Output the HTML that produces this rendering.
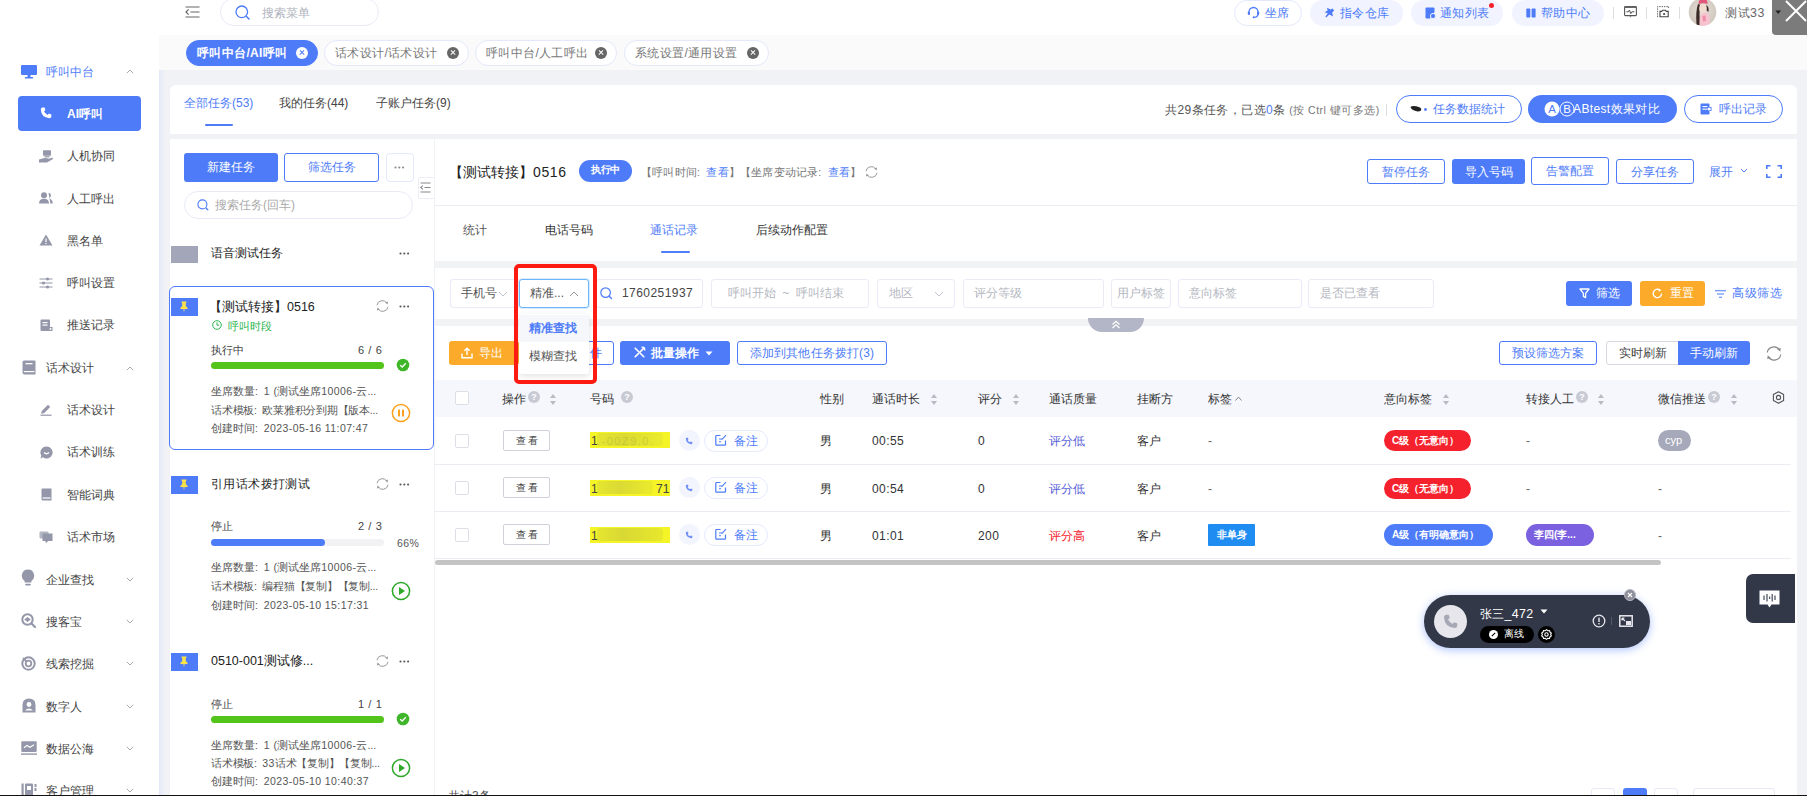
<!DOCTYPE html>
<html lang="zh">
<head>
<meta charset="utf-8">
<title>AI呼叫</title>
<style>
*{box-sizing:border-box;margin:0;padding:0}
html,body{width:1807px;height:796px;overflow:hidden;background:#f0f2f6}
body{font-family:"Liberation Sans",sans-serif;font-size:12px;color:#333;position:relative}
.a{position:absolute}
.t{position:absolute;white-space:nowrap;line-height:16px}
.blue{color:#4e7cf9 !important}
.bgblue{background:#4e7cf9}
svg{display:block}
/* sidebar */
#side{left:0;top:0;width:159px;height:796px;background:#fff}
#sideb{left:159px;top:0;width:6px;height:796px;background:linear-gradient(90deg,#e2e6f6,#eaedf8 40%,rgba(240,242,247,0))}
.mi{position:absolute;left:67px;font-size:12px;line-height:16px;color:#444;white-space:nowrap}
.mp{position:absolute;left:47px;font-size:12px;line-height:16px;color:#444;white-space:nowrap}
.ic{position:absolute}
/* top */
#top{left:159px;top:0;width:1648px;height:35px;background:#fff}
#tabs{left:159px;top:35px;width:1648px;height:35px;background:#fafafa}
.pill{position:absolute;top:0;height:26px;border-radius:13px;background:#f1f4fe;color:#4e7cf9;font-size:12px;line-height:26px;white-space:nowrap;letter-spacing:0.3px}
.tab{position:absolute;top:40px;height:26px;border-radius:13px;background:#fff;border:1px solid #e4e8fa;color:#777;font-size:12px;line-height:24px;padding-left:10px;white-space:nowrap;letter-spacing:0.35px}
.tab i{position:absolute;right:9px;top:6px;width:12px;height:12px;border-radius:6px;background:#666}
.tab i:before,.tab i:after{content:"";position:absolute;left:3px;top:5.4px;width:6px;height:1.3px;background:#fff;transform:rotate(45deg)}
.tab i:after{transform:rotate(-45deg)}
.tab.on i:before,.tab.on i:after{background:#4e7cf9}
.panel{position:absolute;background:#fff}
.btn{position:absolute;font-size:12px;text-align:center;white-space:nowrap;border-radius:3px}
.inp{position:absolute;top:279px;height:29px;border:1px solid #e9ecf8;border-radius:3px;background:#fff;font-size:12px;line-height:27px;color:#b4b7c0;white-space:nowrap;padding-left:10px}
.th{position:absolute;top:391px;font-size:12px;line-height:16px;color:#333;white-space:nowrap}
.td{position:absolute;font-size:12px;line-height:16px;color:#333;white-space:nowrap}
.cb{position:absolute;left:455px;width:14px;height:14px;border:1px solid #dcdfe6;border-radius:2px;background:#fff}
.tag{position:absolute;height:21px;border-radius:11px;color:#fff;font-size:10px;font-weight:bold;line-height:21px;padding:0 8px;white-space:nowrap}
.sm{position:absolute;font-size:10.5px;line-height:14px;color:#555;white-space:nowrap;left:211px;letter-spacing:0}
.sm b{font-weight:normal;letter-spacing:0.4px}
.sm u{display:inline-block;width:3px;text-decoration:none}
.mp{left:46px}
</style>
</head>
<body>
<!-- SIDEBAR -->
<div id="side" class="a"></div>
<div id="sideb" class="a"></div>
<div class="mp blue" style="top:64px">呼叫中台</div>
<svg class="ic" style="left:21px;top:65px" width="16" height="14" viewBox="0 0 16 14"><rect x="0" y="0" width="16" height="10" rx="1" fill="#4e7cf9"/><rect x="6.5" y="10" width="3" height="2" fill="#4e7cf9"/><rect x="4" y="12" width="8" height="1.5" fill="#4e7cf9"/></svg>
<svg class="ic" style="left:126px;top:69px" width="8" height="5" viewBox="0 0 8 5"><path d="M0.8 4.2 L4 1 L7.2 4.2" fill="none" stroke="#aaa" stroke-width="1"/></svg>

<div class="a bgblue" style="left:18px;top:96px;width:123px;height:35px;border-radius:4px"></div>
<svg class="ic" style="left:40px;top:107px" width="12" height="12" viewBox="0 0 12 12"><path d="M2.6 0.6 L4.6 0.6 L5.4 3.2 L4 4.2 Q5 6.8 7.8 8 L8.8 6.6 L11.4 7.4 L11.4 9.4 Q11.2 11.2 9.4 11.2 Q1.2 10.6 0.8 2.6 Q0.8 0.8 2.6 0.6Z" fill="#fff"/></svg>
<div class="mi" style="top:106px;color:#fff;font-weight:bold">AI呼叫</div>

<svg class="ic" style="left:39px;top:150px" width="14" height="13" viewBox="0 0 14 13"><rect x="4" y="0.3" width="8" height="5.4" rx="0.8" fill="#9497a9"/><rect x="5.5" y="6.2" width="5" height="1.2" fill="#9497a9"/><path d="M0 9.4 L3.6 8.4 Q7 7.6 10 8.8 L13.4 7.6 L14 9 L8 12.6 L0 12.6Z" fill="#9497a9"/></svg>
<div class="mi" style="top:148px">人机协同</div>

<svg class="ic" style="left:39px;top:192px" width="14" height="12" viewBox="0 0 14 12"><circle cx="5" cy="3.2" r="3" fill="#9497a9"/><path d="M0 11.5 Q0 6.8 5 6.8 Q10 6.8 10 11.5Z" fill="#9497a9"/><path d="M9.5 0.8 Q12 1 12 3.4 Q12 5.6 9.8 6.2 Q13.6 7 13.8 11.5 L11.4 11.5" fill="#9497a9"/></svg>
<div class="mi" style="top:191px">人工呼出</div>

<svg class="ic" style="left:39px;top:234px" width="14" height="12" viewBox="0 0 14 12"><path d="M7 0.5 L13.5 11.5 L0.5 11.5Z" fill="#9497a9"/><rect x="6.4" y="4.5" width="1.2" height="3.6" fill="#fff"/><rect x="6.4" y="9" width="1.2" height="1.2" fill="#fff"/></svg>
<div class="mi" style="top:233px">黑名单</div>

<svg class="ic" style="left:39px;top:277px" width="14" height="12" viewBox="0 0 14 12"><g stroke="#9497a9" stroke-width="1.2" fill="none"><path d="M0.5 2 H13.5 M0.5 6 H13.5 M0.5 10 H13.5"/></g><g fill="#9497a9"><circle cx="8.5" cy="2" r="1.6"/><circle cx="4.5" cy="6" r="1.6"/><circle cx="8.5" cy="10" r="1.6"/></g></svg>
<div class="mi" style="top:275px">呼叫设置</div>

<svg class="ic" style="left:40px;top:319px" width="13" height="13" viewBox="0 0 13 13"><path d="M1.5 0.5 H9 Q10 0.5 10 1.5 V8 H12.5 V12 H1.5 Q0.5 12 0.5 11 V1.5 Q0.5 0.5 1.5 0.5Z" fill="#9497a9"/><rect x="2.5" y="3" width="5" height="1.2" fill="#fff"/><rect x="2.5" y="5.5" width="5" height="1.2" fill="#fff"/><circle cx="10.5" cy="10" r="1" fill="#fff"/></svg>
<div class="mi" style="top:317px">推送记录</div>

<svg class="ic" style="left:22px;top:360px" width="14" height="15" viewBox="0 0 14 15"><path d="M2 0.5 H12.5 Q13.5 0.5 13.5 1.5 V14.5 H2.5 Q0.5 14.5 0.5 12.5 V2 Q0.5 0.5 2 0.5Z" fill="#9497a9"/><rect x="3.5" y="3" width="7" height="1.3" fill="#fff"/><rect x="1.8" y="11" width="10.6" height="1.2" fill="#fff"/></svg>
<div class="mp" style="top:360px">话术设计</div>
<svg class="ic" style="left:126px;top:366px" width="8" height="5" viewBox="0 0 8 5"><path d="M0.8 4.2 L4 1 L7.2 4.2" fill="none" stroke="#aaa" stroke-width="1"/></svg>

<svg class="ic" style="left:40px;top:404px" width="12" height="12" viewBox="0 0 12 12"><path d="M8 0.8 L10.2 3 L4 9.2 L1.2 9.8 L1.8 7Z" fill="#9497a9"/><rect x="0.5" y="10.6" width="11" height="1.2" fill="#9497a9"/></svg>
<div class="mi" style="top:402px">话术设计</div>

<svg class="ic" style="left:40px;top:446px" width="13" height="13" viewBox="0 0 13 13"><path d="M6.5 0.5 A6 6 0 1 1 3 11.3 L0.5 12.5 L1.3 9.6 A6 6 0 0 1 6.5 0.5Z" fill="#9497a9"/><path d="M4 6.5 Q6.5 9 9 6.5" stroke="#fff" stroke-width="1.2" fill="none"/></svg>
<div class="mi" style="top:444px">话术训练</div>

<svg class="ic" style="left:41px;top:488px" width="11" height="13" viewBox="0 0 11 13"><path d="M1.5 0.5 H10.5 V12.5 H2 Q0.5 12.5 0.5 11 V1.5 Q0.5 0.5 1.5 0.5Z" fill="#9497a9"/><rect x="1.6" y="9.4" width="8" height="1.2" fill="#fff"/></svg>
<div class="mi" style="top:487px">智能词典</div>

<svg class="ic" style="left:39px;top:531px" width="14" height="13" viewBox="0 0 14 13"><rect x="0.5" y="0.5" width="9" height="7" rx="1" fill="#b3b6c3"/><path d="M3.5 2.5 H13.5 V10 H9 L7.5 12 L6 10 H3.5Z" fill="#9497a9"/></svg>
<div class="mi" style="top:529px">话术市场</div>

<svg class="ic" style="left:21px;top:569px" width="14" height="18" viewBox="0 0 12 16"><path d="M6 0.5 A5.5 5.5 0 0 1 9 10.6 V12 H3 V10.6 A5.5 5.5 0 0 1 6 0.5Z" fill="#9497a9"/><rect x="3.5" y="13" width="5" height="1.6" rx="0.8" fill="#9497a9"/></svg>
<div class="mp" style="top:572px">企业查找</div>
<svg class="ic" style="left:126px;top:577px" width="8" height="5" viewBox="0 0 8 5"><path d="M0.8 0.8 L4 4 L7.2 0.8" fill="none" stroke="#aaa" stroke-width="1"/></svg>

<svg class="ic" style="left:21px;top:613px" width="15" height="15" viewBox="0 0 15 15"><circle cx="6.5" cy="6.5" r="5.2" fill="none" stroke="#9497a9" stroke-width="2"/><path d="M10.5 10.5 L14 14" stroke="#9497a9" stroke-width="2.2" stroke-linecap="round"/><path d="M3.2 6.5 L6.5 4 L9.8 6.5 L6.5 9Z" fill="#9497a9"/></svg>
<div class="mp" style="top:614px">搜客宝</div>
<svg class="ic" style="left:126px;top:619px" width="8" height="5" viewBox="0 0 8 5"><path d="M0.8 0.8 L4 4 L7.2 0.8" fill="none" stroke="#aaa" stroke-width="1"/></svg>

<svg class="ic" style="left:21px;top:656px" width="15" height="15" viewBox="0 0 15 15"><circle cx="7.5" cy="7.5" r="6.2" fill="none" stroke="#9497a9" stroke-width="2"/><circle cx="7.5" cy="7.5" r="2.8" fill="none" stroke="#9497a9" stroke-width="1.8"/><path d="M2 2 L5.5 5.5" stroke="#9497a9" stroke-width="1.8"/></svg>
<div class="mp" style="top:656px">线索挖掘</div>
<svg class="ic" style="left:126px;top:661px" width="8" height="5" viewBox="0 0 8 5"><path d="M0.8 0.8 L4 4 L7.2 0.8" fill="none" stroke="#aaa" stroke-width="1"/></svg>

<svg class="ic" style="left:22px;top:698px" width="14" height="15" viewBox="0 0 14 15"><path d="M7 0.5 Q13.5 0.5 13.5 7 V14.5 H0.5 V7 Q0.5 0.5 7 0.5Z" fill="#9497a9"/><circle cx="7" cy="6.5" r="2.4" fill="#fff"/><path d="M3 12.5 Q7 8.5 11 12.5Z" fill="#fff"/></svg>
<div class="mp" style="top:699px">数字人</div>
<svg class="ic" style="left:126px;top:704px" width="8" height="5" viewBox="0 0 8 5"><path d="M0.8 0.8 L4 4 L7.2 0.8" fill="none" stroke="#aaa" stroke-width="1"/></svg>

<svg class="ic" style="left:21px;top:741px" width="16" height="14" viewBox="0 0 16 14"><rect x="0.3" y="0.3" width="15.4" height="10.6" rx="1" fill="#9497a9"/><path d="M3 6.8 L6 4.4 L9 6.2 L13 3.8" fill="none" stroke="#fff" stroke-width="1.2"/><rect x="0" y="12.4" width="16" height="1.4" fill="#9497a9"/></svg>
<div class="mp" style="top:741px">数据公海</div>
<svg class="ic" style="left:126px;top:746px" width="8" height="5" viewBox="0 0 8 5"><path d="M0.8 0.8 L4 4 L7.2 0.8" fill="none" stroke="#aaa" stroke-width="1"/></svg>

<svg class="ic" style="left:21px;top:783px" width="16" height="14" viewBox="0 0 16 14"><rect x="0.5" y="0.5" width="2.2" height="13" fill="#9497a9"/><rect x="4" y="0.5" width="8" height="13" rx="1" fill="#9497a9"/><rect x="6" y="3" width="4" height="4" fill="#fff"/><rect x="13.5" y="1" width="2" height="3" fill="#9497a9"/><rect x="13.5" y="5" width="2" height="3" fill="#9497a9"/></svg>
<div class="mp" style="top:783px">客户管理</div>
<svg class="ic" style="left:126px;top:788px" width="8" height="5" viewBox="0 0 8 5"><path d="M0.8 0.8 L4 4 L7.2 0.8" fill="none" stroke="#aaa" stroke-width="1"/></svg>

<!-- TOP BAR -->
<div id="top" class="a"></div>
<div id="tabs" class="a"></div>
<svg class="ic" style="left:185px;top:6px" width="15" height="12" viewBox="0 0 15 12"><g stroke="#666" stroke-width="1.2" fill="none"><path d="M0.5 1 H14.5 M5.5 6 H14.5 M0.5 11 H14.5"/><path d="M3.6 3.4 L1 6 L3.6 8.6"/></g></svg>
<div class="a" style="left:220px;top:-2px;width:159px;height:28px;border:1px solid #e8ebf7;border-radius:14px;background:#fff"></div>
<svg class="ic" style="left:235px;top:5px" width="16" height="15" viewBox="0 0 16 15"><circle cx="6.8" cy="6.8" r="5.8" fill="none" stroke="#4e7cf9" stroke-width="1.3"/><path d="M11.5 11.5 L14 14" stroke="#4e7cf9" stroke-width="1.5" stroke-linecap="round"/></svg>
<div class="t" style="left:262px;top:5px;color:#b0b3bd">搜索菜单</div>

<div class="pill" style="left:1234px;width:68px;background:#fff;border:1px solid #e4e8fa;line-height:24px;padding-left:30px">坐席</div>
<svg class="ic" style="left:1247px;top:6px" width="13" height="13" viewBox="0 0 13 13"><path d="M2 8 V6 A4.5 4.5 0 0 1 11 6 V8 Q11 11 7.5 11.3" fill="none" stroke="#4e7cf9" stroke-width="1.3"/><rect x="0.8" y="5.5" width="2.2" height="3.6" rx="1" fill="#4e7cf9"/><rect x="10" y="5.5" width="2.2" height="3.6" rx="1" fill="#4e7cf9"/><circle cx="6.8" cy="11.3" r="1.1" fill="#4e7cf9"/></svg>
<div class="pill" style="left:1310px;width:93px;padding-left:30px">指令仓库</div>
<svg class="ic" style="left:1324px;top:7px" width="11" height="11" viewBox="0 0 11 11"><path d="M3 0.8 L6.6 2.4 L8.4 1.6 L10.2 3.4 L8.2 5.4 L9 9.6 L5.4 7.6 L2.2 10.4 L1.4 9.6 L3.8 6.2 L0.6 5.2 L3.6 3.6Z" fill="#4e7cf9"/></svg>
<div class="pill" style="left:1411px;width:92px;padding-left:29px">通知列表</div>
<svg class="ic" style="left:1425px;top:7px" width="11" height="12" viewBox="0 0 11 12"><path d="M1.5 0.5 H8.5 Q9.5 0.5 9.5 1.5 V5 L5 11.5 H1.5 Q0.5 11.5 0.5 10.5 V1.5 Q0.5 0.5 1.5 0.5Z" fill="#4e7cf9"/><circle cx="8" cy="9" r="2.6" fill="#4e7cf9" stroke="#f1f4fe" stroke-width="1"/></svg>
<div class="a" style="left:1489px;top:3px;width:5px;height:5px;border-radius:3px;background:#f5222d"></div>
<div class="pill" style="left:1512px;width:92px;padding-left:29px">帮助中心</div>
<svg class="ic" style="left:1526px;top:8px" width="10" height="10" viewBox="0 0 10 10"><rect x="0.3" y="0.5" width="4" height="9" rx="0.8" fill="#4e7cf9"/><rect x="5.6" y="0.5" width="4" height="9" rx="0.8" fill="#4e7cf9"/></svg>

<div class="a" style="left:1613px;top:7px;width:1px;height:12px;background:#ddd"></div>
<svg class="ic" style="left:1624px;top:6px" width="13" height="12" viewBox="0 0 13 12"><rect x="0.6" y="0.6" width="11.8" height="9" rx="0.8" fill="none" stroke="#555" stroke-width="1.1"/><rect x="0.6" y="0.4" width="11.8" height="1.6" fill="#666"/><path d="M2.4 5.8 H4.4 L5.4 4 L6.8 7.6 L7.8 5.8 H10.4" fill="none" stroke="#555" stroke-width="1"/><path d="M5.5 10.5 H7.5 L6.5 11.6Z" fill="#555"/></svg>
<div class="a" style="left:1646px;top:7px;width:1px;height:12px;background:#ddd"></div>
<svg class="ic" style="left:1657px;top:6px" width="12" height="12" viewBox="0 0 12 12"><path d="M0.6 11 V0.6 H11.4" fill="none" stroke="#666" stroke-width="1" stroke-dasharray="1.4 1"/><path d="M11.4 0.6 V3" fill="none" stroke="#666" stroke-width="1" stroke-dasharray="1.4 1"/><path d="M3 5.4 H4.8 L5.6 4.2 H8.4 L9.2 5.4 H11.2 V10.8 H3Z" fill="none" stroke="#444" stroke-width="1.1"/><circle cx="7.1" cy="8" r="1.1" fill="#444"/></svg>
<div class="a" style="left:1679px;top:7px;width:1px;height:12px;background:#ddd"></div>
<!-- avatar -->
<svg class="ic" style="left:1688px;top:-1px" width="29" height="28" viewBox="0 0 29 28"><defs><clipPath id="av"><circle cx="14.5" cy="13" r="13.8"/></clipPath><radialGradient id="avg" cx="0.5" cy="0.4" r="0.7"><stop offset="0" stop-color="#e6e0d8"/><stop offset="1" stop-color="#c9c0b4"/></radialGradient></defs><g clip-path="url(#av)"><rect width="29" height="28" fill="url(#avg)"/><path d="M10 5 Q7.5 12 8.5 26 L12.5 26 Q10.5 14 12.5 6Z" fill="#3a2b27"/><path d="M17.5 6 Q21.5 7 20.5 13 L18 11Z" fill="#3a2b27"/><ellipse cx="15" cy="9.5" rx="3.8" ry="4.4" fill="#f2dcd2"/><path d="M10.5 5.2 Q10.5 -1 15.5 -0.5 Q20 0 19.5 5 Q15 3.6 10.5 5.2Z" fill="#e2567a"/><path d="M11.5 27 Q11 16 14 14.5 L18.5 13.5 Q22.5 15 21.5 27Z" fill="#f7c3d0"/><path d="M14.5 17 L17.5 16.5 L17.8 22 L15 22.5Z" fill="#ee7f9d" opacity=".8"/></g></svg>
<div class="t" style="left:1725px;top:5px;font-size:12.4px;letter-spacing:0.5px;color:#666">测试33</div>
<div class="a" style="left:1772px;top:0;width:35px;height:35px;background:#7b7b7b;border-bottom-left-radius:4px"></div>
<svg class="ic" style="left:1772px;top:0" width="35" height="35" viewBox="0 0 35 35"><path d="M3.4 10.6 H9 L6.2 14Z" fill="#222"/><path d="M14 1 L34 21 M34 1 L14 21" stroke="#fff" stroke-width="2"/></svg>

<div class="tab on" style="left:186px;width:132px;background:#4e7cf9;border-color:#4e7cf9;color:#fff;font-weight:bold">呼叫中台/AI呼叫<i style="background:#fff"></i></div>
<div class="tab" style="left:324px;width:145px">话术设计/话术设计<i></i></div>
<div class="tab" style="left:475px;width:142px">呼叫中台/人工呼出<i></i></div>
<div class="tab" style="left:624px;width:145px">系统设置/通用设置<i></i></div>

<!-- TASK TABS -->
<div class="panel" style="left:170px;top:85px;width:1627px;height:49px;border-radius:6px 6px 0 0"></div>
<div class="t blue" style="left:184px;top:95px">全部任务(53)</div>
<div class="a bgblue" style="left:205px;top:124px;width:28px;height:2px;border-radius:1px"></div>
<div class="t" style="left:279px;top:95px;color:#444">我的任务(44)</div>
<div class="t" style="left:376px;top:95px;color:#444">子账户任务(9)</div>
<div class="t" style="left:1165px;top:102px;color:#555;letter-spacing:0.4px">共29条任务，已选<span class="blue">0</span>条 <span style="font-size:10.5px;color:#777;letter-spacing:0.5px">(按 Ctrl 键可多选)</span></div>
<div class="a" style="left:1386px;top:104px;width:1px;height:12px;background:#ddd"></div>
<div class="btn blue" style="left:1396px;top:95px;width:126px;height:28px;border:1px solid #4e7cf9;border-radius:14px;line-height:26px;background:#fff;padding-left:20px">任务数据统计</div>
<svg class="ic" style="left:1410px;top:105px" width="18" height="8" viewBox="0 0 18 8"><path d="M0.5 2 Q3 0 10 2.5 Q12 3.5 11 5.5 Q8 7.5 3 5 Q1 4 0.5 2Z" fill="#222"/><circle cx="15.5" cy="4.5" r="1.4" fill="#4e7cf9"/></svg>
<div class="btn bgblue" style="left:1528px;top:95px;width:149px;height:28px;border-radius:14px;line-height:28px;color:#fff;padding-left:28px;letter-spacing:0.35px">ABtest效果对比</div>
<svg class="ic" style="left:1544px;top:101px" width="32" height="16" viewBox="0 0 32 16"><circle cx="23" cy="8" r="7" fill="#4e7cf9" stroke="#fff" stroke-width="1"/><circle cx="8" cy="8" r="7.5" fill="#fff"/><text x="8" y="12.2" font-family="Liberation Sans" font-size="11.5" text-anchor="middle" fill="#4e7cf9">A</text><text x="23" y="12.2" font-family="Liberation Sans" font-size="11.5" text-anchor="middle" fill="#fff">B</text></svg>
<div class="btn blue" style="left:1684px;top:95px;width:99px;height:28px;border:1px solid #4e7cf9;border-radius:14px;line-height:26px;background:#fff;padding-left:18px">呼出记录</div>
<svg class="ic" style="left:1700px;top:103px" width="12" height="12" viewBox="0 0 12 12"><path d="M1.5 0.5 H8.5 Q9.5 0.5 9.5 1.5 V4 H11.5 V8 H9.5 V10.5 Q9.5 11.5 8.5 11.5 H1.5 Q0.5 11.5 0.5 10.5 V1.5 Q0.5 0.5 1.5 0.5Z" fill="#4e7cf9"/><rect x="2.4" y="3" width="5" height="1.1" fill="#fff"/><rect x="2.4" y="5.6" width="5" height="1.1" fill="#fff"/><circle cx="9.2" cy="6" r="1.6" fill="#fff"/></svg>

<!-- LEFT LIST -->
<div class="panel" style="left:170px;top:139px;width:264px;height:657px"></div>
<div class="btn bgblue" style="left:184px;top:153px;width:94px;height:29px;line-height:29px;color:#fff">新建任务</div>
<div class="btn blue" style="left:284px;top:153px;width:95px;height:29px;line-height:27px;border:1px solid #4e7cf9;background:#fff">筛选任务</div>
<div class="btn" style="left:386px;top:153px;width:28px;height:29px;border:1px solid #e4e8fa;background:#fff;border-radius:4px"></div><svg class="ic" style="left:394px;top:166px" width="11" height="3" viewBox="0 0 11 3"><g fill="#888"><circle cx="1.5" cy="1.5" r="1.05"/><circle cx="5.3" cy="1.5" r="1.05"/><circle cx="9.1" cy="1.5" r="1.05"/></g></svg>
<div class="a" style="left:418px;top:177px;width:16px;height:22px;border:1px solid #eceef6;border-right:none;background:#fff;border-radius:2px 0 0 2px"></div>
<svg class="ic" style="left:420px;top:182px" width="11" height="11" viewBox="0 0 11 11"><g stroke="#888" stroke-width="1.1" fill="none"><path d="M0.5 1 H10.5 M4.5 5.5 H10.5 M0.5 10 H10.5"/><path d="M2.8 3.6 L0.8 5.5 L2.8 7.4"/></g></svg>
<div class="a" style="left:184px;top:191px;width:229px;height:28px;border:1px solid #e8ebf7;border-radius:14px;background:#fff"></div>
<svg class="ic" style="left:197px;top:199px" width="13" height="13" viewBox="0 0 13 13"><circle cx="5.4" cy="5.4" r="4.5" fill="none" stroke="#4e7cf9" stroke-width="1.1"/><path d="M9.2 9.2 L10.8 10.8" stroke="#4e7cf9" stroke-width="1.3" stroke-linecap="round"/></svg>
<div class="t" style="left:215px;top:197px;color:#aaa">搜索任务(回车)</div>
<div class="a" style="left:171px;top:246px;width:27px;height:17px;background:#a3a6b9"></div>
<div class="t" style="left:211px;top:245px;color:#222">语音测试任务</div><svg class="ic" style="left:399px;top:252px" width="11" height="3" viewBox="0 0 11 3"><g fill="#555"><circle cx="1.5" cy="1.5" r="1.05"/><circle cx="5.3" cy="1.5" r="1.05"/><circle cx="9.1" cy="1.5" r="1.05"/></g></svg>
<div class="a" style="left:169px;top:286px;width:265px;height:164px;border:1px solid #4e7cf9;border-radius:6px;background:#fff"></div>
<div class="a bgblue" style="left:171px;top:298px;width:27px;height:18px"></div><svg class="ic" style="left:179px;top:301px" width="10" height="12" viewBox="0 0 10 12"><path d="M2.5 0.5 H7.5 V1.6 L6.8 2 V5 L8.6 7 V8 H5.6 L5 11.5 L4.4 8 H1.4 V7 L3.2 5 V2 L2.5 1.6Z" fill="#ffe14a"/></svg>
<div class="t" id="c1t" style="left:209px;top:299px;font-size:12.5px;color:#222">【测试转接】<b style="font-weight:normal;letter-spacing:0">0516</b></div><svg class="ic" style="left:376px;top:300px" width="13" height="12" viewBox="0 0 13 12"><g fill="none" stroke="#999" stroke-width="1"><path d="M1 5.2 A5.4 5.4 0 0 1 10.8 3"/><path d="M12 6.8 A5.4 5.4 0 0 1 2.2 9"/></g><path d="M9.2 2.4 L12 1.6 L11.6 4.6Z" fill="#999"/><path d="M3.8 9.6 L1 10.4 L1.4 7.4Z" fill="#999"/></svg><svg class="ic" style="left:399px;top:305px" width="11" height="3" viewBox="0 0 11 3"><g fill="#555"><circle cx="1.5" cy="1.5" r="1.05"/><circle cx="5.3" cy="1.5" r="1.05"/><circle cx="9.1" cy="1.5" r="1.05"/></g></svg>
<svg class="ic" style="left:212px;top:320px" width="10" height="10" viewBox="0 0 10 10"><circle cx="5" cy="5" r="4.3" fill="none" stroke="#2fb552" stroke-width="1"/><path d="M5 2.4 V5.2 H7.2" fill="none" stroke="#2fb552" stroke-width="1"/></svg>
<div class="t" style="left:228px;top:318px;font-size:10.5px;color:#2fb552">呼叫时段</div>
<div class="t" style="left:211px;top:342px;font-size:10.5px;color:#444">执行中</div><div class="t" style="left:358px;top:342px;font-size:11px;color:#444;letter-spacing:0.6px;word-spacing:0">6 / 6</div>
<div class="a" style="left:211px;top:362px;width:173px;height:7px;border-radius:4px;background:#52c41a"></div><svg class="ic" style="left:396px;top:358px" width="14" height="14" viewBox="0 0 14 14"><circle cx="7" cy="7" r="6.3" fill="#3fb52a"/><path d="M4.2 7.2 L6.2 9 L9.8 5.2" fill="none" stroke="#fff" stroke-width="1.3"/></svg>
<div class="sm" id="s1" style="top:384px">坐席数量:<u></u> <b>1 (</b>测试坐席<b>10006-</b>云...</div>
<div class="sm" id="s2" style="top:403px;letter-spacing:-0.25px">话术模板:<u></u> 欧莱雅积分到期【版本...</div>
<div class="sm" id="s3" style="top:421px">创建时间:<u></u> <b>2023-05-16 11:07:47</b></div>
<svg class="ic" style="left:391px;top:403px" width="20" height="20" viewBox="0 0 20 20"><circle cx="10" cy="10" r="8.6" fill="#fff" stroke="#faa21e" stroke-width="1.5"/><rect x="7" y="6.5" width="2" height="7" rx="0.6" fill="#faa21e"/><rect x="11" y="6.5" width="2" height="7" rx="0.6" fill="#faa21e"/></svg>
<div class="a bgblue" style="left:171px;top:476px;width:27px;height:18px"></div><svg class="ic" style="left:179px;top:479px" width="10" height="12" viewBox="0 0 10 12"><path d="M2.5 0.5 H7.5 V1.6 L6.8 2 V5 L8.6 7 V8 H5.6 L5 11.5 L4.4 8 H1.4 V7 L3.2 5 V2 L2.5 1.6Z" fill="#ffe14a"/></svg>
<div class="t" id="c2t" style="left:211px;top:476px;font-size:12.4px;letter-spacing:0.4px;color:#222">引用话术拨打测试</div><svg class="ic" style="left:376px;top:478px" width="13" height="12" viewBox="0 0 13 12"><g fill="none" stroke="#999" stroke-width="1"><path d="M1 5.2 A5.4 5.4 0 0 1 10.8 3"/><path d="M12 6.8 A5.4 5.4 0 0 1 2.2 9"/></g><path d="M9.2 2.4 L12 1.6 L11.6 4.6Z" fill="#999"/><path d="M3.8 9.6 L1 10.4 L1.4 7.4Z" fill="#999"/></svg><svg class="ic" style="left:399px;top:483px" width="11" height="3" viewBox="0 0 11 3"><g fill="#555"><circle cx="1.5" cy="1.5" r="1.05"/><circle cx="5.3" cy="1.5" r="1.05"/><circle cx="9.1" cy="1.5" r="1.05"/></g></svg>
<div class="t" style="left:211px;top:518px;font-size:10.5px;color:#444">停止</div><div class="t" style="left:358px;top:518px;font-size:11px;color:#444;letter-spacing:0.6px;word-spacing:0">2 / 3</div>
<div class="a" style="left:211px;top:539px;width:173px;height:7px;border-radius:4px;background:#f2f2f5"></div>
<div class="a bgblue" style="left:211px;top:539px;width:114px;height:7px;border-radius:4px"></div>
<div class="t" style="left:397px;top:535px;font-size:10.5px;color:#555;letter-spacing:0.4px">66%</div>
<div class="sm" style="top:560px">坐席数量:<u></u> <b>1 (</b>测试坐席<b>10006-</b>云...</div>
<div class="sm" style="top:579px;letter-spacing:-0.25px">话术模板:<u></u> 编程猫【复制】【复制...</div>
<div class="sm" style="top:598px">创建时间:<u></u> <b>2023-05-10 15:17:31</b></div>
<svg class="ic" style="left:391px;top:581px" width="20" height="20" viewBox="0 0 20 20"><circle cx="10" cy="10" r="8.6" fill="#fff" stroke="#2fa82a" stroke-width="1.5"/><path d="M8 6 L14 10 L8 14Z" fill="#2fa82a"/></svg>
<div class="a bgblue" style="left:171px;top:653px;width:27px;height:18px"></div><svg class="ic" style="left:179px;top:656px" width="10" height="12" viewBox="0 0 10 12"><path d="M2.5 0.5 H7.5 V1.6 L6.8 2 V5 L8.6 7 V8 H5.6 L5 11.5 L4.4 8 H1.4 V7 L3.2 5 V2 L2.5 1.6Z" fill="#ffe14a"/></svg>
<div class="t" id="c3t" style="left:211px;top:653px;font-size:12.5px;color:#222"><b style="font-weight:normal;letter-spacing:0">0510-001</b>测试修...</div><svg class="ic" style="left:376px;top:655px" width="13" height="12" viewBox="0 0 13 12"><g fill="none" stroke="#999" stroke-width="1"><path d="M1 5.2 A5.4 5.4 0 0 1 10.8 3"/><path d="M12 6.8 A5.4 5.4 0 0 1 2.2 9"/></g><path d="M9.2 2.4 L12 1.6 L11.6 4.6Z" fill="#999"/><path d="M3.8 9.6 L1 10.4 L1.4 7.4Z" fill="#999"/></svg><svg class="ic" style="left:399px;top:660px" width="11" height="3" viewBox="0 0 11 3"><g fill="#555"><circle cx="1.5" cy="1.5" r="1.05"/><circle cx="5.3" cy="1.5" r="1.05"/><circle cx="9.1" cy="1.5" r="1.05"/></g></svg>
<div class="t" style="left:211px;top:696px;font-size:10.5px;color:#444">停止</div><div class="t" style="left:358px;top:696px;font-size:11px;color:#444;letter-spacing:0.6px;word-spacing:0">1 / 1</div>
<div class="a" style="left:211px;top:716px;width:173px;height:7px;border-radius:4px;background:#52c41a"></div><svg class="ic" style="left:396px;top:712px" width="14" height="14" viewBox="0 0 14 14"><circle cx="7" cy="7" r="6.3" fill="#3fb52a"/><path d="M4.2 7.2 L6.2 9 L9.8 5.2" fill="none" stroke="#fff" stroke-width="1.3"/></svg>
<div class="sm" style="top:738px">坐席数量:<u></u> <b>1 (</b>测试坐席<b>10006-</b>云...</div>
<div class="sm" style="top:756px;letter-spacing:-0.25px">话术模板:<u></u> <b>33</b>话术【复制】【复制...</div>
<div class="sm" style="top:774px">创建时间:<u></u> <b>2023-05-10 10:40:37</b></div>
<svg class="ic" style="left:391px;top:758px" width="20" height="20" viewBox="0 0 20 20"><circle cx="10" cy="10" r="8.6" fill="#fff" stroke="#2fa82a" stroke-width="1.5"/><path d="M8 6 L14 10 L8 14Z" fill="#2fa82a"/></svg>
<!-- RIGHT PANEL -->
<div class="panel" style="left:435px;top:139px;width:1362px;height:122px"></div>
<div class="t" id="ttl" style="left:449px;top:163px;font-size:14px;line-height:18px;color:#222">【测试转接】<span style="letter-spacing:0.6px">0516</span></div>
<div class="a bgblue" style="left:579px;top:160px;width:53px;height:22px;border-radius:11px;color:#fff;font-size:10px;font-weight:bold;line-height:20px;text-align:center;letter-spacing:-0.3px">执行中</div>
<div class="t" id="info" style="left:641px;top:165px;font-size:10.5px;line-height:14px;color:#777;letter-spacing:0.2px">【呼叫时间:&nbsp;&nbsp;<span class="blue">查看</span>】【坐席变动记录:&nbsp;&nbsp;<span class="blue">查看</span>】</div>
<svg class="ic" style="left:865px;top:166px" width="13" height="12" viewBox="0 0 13 12"><g fill="none" stroke="#999" stroke-width="1"><path d="M1 5.2 A5.4 5.4 0 0 1 10.8 3"/><path d="M12 6.8 A5.4 5.4 0 0 1 2.2 9"/></g><path d="M9.2 2.4 L12 1.6 L11.6 4.6Z" fill="#999"/><path d="M3.8 9.6 L1 10.4 L1.4 7.4Z" fill="#999"/></svg>

<div class="btn blue" style="left:1367px;top:159px;width:78px;height:25px;line-height:24px;border:1px solid #4e7cf9;background:#fff">暂停任务</div>
<div class="btn bgblue" style="left:1452px;top:159px;width:73px;height:25px;line-height:26px;color:#fff">导入号码</div>
<div class="btn blue" style="left:1531px;top:157px;width:78px;height:28px;line-height:27px;border:1px solid #4e7cf9;background:#fff">告警配置</div>
<div class="btn blue" style="left:1616px;top:159px;width:78px;height:25px;line-height:24px;border:1px solid #4e7cf9;background:#fff">分享任务</div>
<div class="t blue" style="left:1709px;top:164px">展开</div>
<svg class="ic" style="left:1740px;top:168px" width="8" height="5" viewBox="0 0 8 5"><path d="M1 1 L4 4 L7 1" fill="none" stroke="#4e7cf9" stroke-width="1"/></svg>
<svg class="ic" style="left:1766px;top:165px" width="16" height="13" viewBox="0 0 16 13"><g fill="none" stroke="#4e7cf9" stroke-width="1.6"><path d="M0.8 4 V0.8 H4.5 M11.5 0.8 H15.2 V4 M15.2 9 V12.2 H11.5 M4.5 12.2 H0.8 V9"/></g></svg>

<div class="a" style="left:435px;top:205px;width:1362px;height:1px;background:#ebedf3"></div>
<div class="t" style="left:463px;top:222px;color:#555">统计</div>
<div class="t" style="left:545px;top:222px;color:#333">电话号码</div>
<div class="t blue" style="left:650px;top:222px">通话记录</div>
<div class="a bgblue" style="left:661px;top:251px;width:29px;height:2px;border-radius:1px"></div>
<div class="t" style="left:756px;top:222px;color:#333">后续动作配置</div>

<div class="a" style="left:435px;top:261px;width:1362px;height:66px;background:#f1f3f5"></div>
<!-- filter row -->
<div class="panel" style="left:435px;top:268px;width:1362px;height:51px"></div>
<div class="inp" style="left:450px;width:66px;color:#555;border-right:none;border-radius:3px 0 0 3px">手机号</div>
<svg class="ic" style="left:498px;top:291px" width="10" height="6" viewBox="0 0 10 6"><path d="M1 1 L5 5 L9 1" fill="none" stroke="#c0c4cc" stroke-width="1"/></svg>
<div class="inp" style="left:519px;width:70px;color:#555;border-color:#6bb6fb;box-shadow:0 0 0 1px #dcebfc">精准...</div>
<svg class="ic" style="left:569px;top:291px" width="10" height="6" viewBox="0 0 10 6"><path d="M1 5 L5 1 L9 5" fill="none" stroke="#999" stroke-width="1"/></svg>
<div class="inp" style="left:596px;width:107px;color:#444;padding-left:25px;letter-spacing:0.45px">1760251937</div>
<svg class="ic" style="left:600px;top:287px" width="13" height="13" viewBox="0 0 13 13"><circle cx="5.6" cy="5.6" r="4.8" fill="none" stroke="#4e7cf9" stroke-width="1.2"/><path d="M9.4 9.4 L11.5 11.5" stroke="#4e7cf9" stroke-width="1.4" stroke-linecap="round"/></svg>
<div class="inp" style="left:711px;width:158px;padding-left:16px;word-spacing:3px">呼叫开始 ~ 呼叫结束</div>
<div class="inp" style="left:877px;width:78px;padding-left:11px">地区</div>
<svg class="ic" style="left:934px;top:291px" width="10" height="6" viewBox="0 0 10 6"><path d="M1 1 L5 5 L9 1" fill="none" stroke="#c0c4cc" stroke-width="1"/></svg>
<div class="inp" style="left:963px;width:141px">评分等级</div>
<div class="inp" style="left:1111px;width:60px;padding-left:5px">用户标签</div>
<div class="inp" style="left:1178px;width:124px">意向标签</div>
<div class="inp" style="left:1308px;width:126px;padding-left:11px">是否已查看</div>
<div class="btn" style="left:1566px;top:281px;width:66px;height:25px;line-height:25px;color:#fff;background:#4e7cf9;padding-left:18px;font-size:12px">筛选</div>
<svg class="ic" style="left:1579px;top:288px" width="11" height="11" viewBox="0 0 11 11"><path d="M1 1 H10 L6.6 5.4 V9.6 L4.4 8.4 V5.4Z" fill="none" stroke="#fff" stroke-width="1.3" stroke-linejoin="round"/></svg>
<div class="btn" style="left:1640px;top:281px;width:65px;height:25px;line-height:25px;color:#fff;background:#fbaa2a;padding-left:18px;font-size:12px">重置</div>
<svg class="ic" style="left:1652px;top:288px" width="11" height="11" viewBox="0 0 11 11"><path d="M9.6 5.5 A4.2 4.2 0 1 1 7.8 2" fill="none" stroke="#fff" stroke-width="1.3"/><path d="M6.6 0.4 L9.4 2.2 L6.8 3.8Z" fill="#fff"/></svg>
<svg class="ic" style="left:1715px;top:290px" width="11" height="8" viewBox="0 0 11 8"><g stroke="#4e7cf9" stroke-width="1.1"><path d="M0 0.8 H11 M2 4 H9 M4 7.2 H7"/></g></svg>
<div class="t blue" style="left:1732px;top:285px;font-size:12px;letter-spacing:0.5px">高级筛选</div>

<!-- collapse tab -->
<div class="a" style="left:1088px;top:318px;width:56px;height:14px;border-radius:0 0 14px 14px;background:#b3b6c6;z-index:3"></div>
<svg class="ic" style="left:1111px;top:320px;z-index:4" width="10" height="9" viewBox="0 0 10 9"><path d="M1.5 4.5 L5 1.2 L8.5 4.5 M1.5 8 L5 4.8 L8.5 8" fill="none" stroke="#fff" stroke-width="1.2"/></svg>

<!-- action row + table panel -->
<div class="panel" style="left:435px;top:326px;width:1362px;height:470px"></div>
<div class="btn" style="left:449px;top:341px;width:70px;height:24px;line-height:24px;color:#fff;background:#fbaa2a;text-align:left;padding-left:30px">导出</div>
<svg class="ic" style="left:461px;top:347px" width="12" height="12" viewBox="0 0 12 12"><path d="M1 6.5 V10.8 H11 V6.5" fill="none" stroke="#fff" stroke-width="1.4"/><path d="M6 8 V1.5 M3.4 3.8 L6 1.2 L8.6 3.8" fill="none" stroke="#fff" stroke-width="1.4"/></svg>
<div class="btn blue" style="left:524px;top:341px;width:90px;height:24px;line-height:22px;border:1px solid #4e7cf9;background:#fff;text-align:right;padding-right:11px">件</div>
<div class="btn bgblue" style="left:620px;top:341px;width:110px;height:24px;line-height:24px;color:#fff;font-weight:bold;text-align:left;padding-left:31px">批量操作</div>
<svg class="ic" style="left:633px;top:346px" width="13" height="13" viewBox="0 0 13 13"><g stroke="#fff" fill="none" stroke-linecap="round"><path d="M2.2 2.2 L10.8 10.8" stroke-width="1.6"/><path d="M10.6 2.4 L7.4 5.6" stroke-width="1.6"/><path d="M5.4 7.6 L2.2 10.8" stroke-width="1.6"/><path d="M9 1.2 Q12 0.8 11.8 4" stroke-width="1.3"/></g></svg>
<svg class="ic" style="left:705px;top:351px" width="8" height="5" viewBox="0 0 8 5"><path d="M0.5 0.5 H7.5 L4 4.5Z" fill="#fff"/></svg>
<div class="btn blue" id="addb" style="left:737px;top:341px;width:150px;height:24px;line-height:22px;border:1px solid #4e7cf9;background:#fff;letter-spacing:0.15px">添加到其他任务拨打(3)</div>
<div class="btn blue" style="left:1499px;top:341px;width:98px;height:24px;line-height:22px;border:1px solid #4e7cf9;background:#fff">预设筛选方案</div>
<div class="btn" style="left:1606px;top:341px;width:73px;height:24px;line-height:22px;border:1px solid #d6d9e1;background:#fff;color:#444;border-radius:3px 0 0 3px">实时刷新</div>
<div class="btn bgblue" style="left:1678px;top:341px;width:72px;height:24px;line-height:24px;color:#fff;border-radius:0 3px 3px 0">手动刷新</div>
<svg class="ic" style="left:1766px;top:346px" width="16" height="15" viewBox="0 0 13 12"><g fill="none" stroke="#888" stroke-width="1"><path d="M1 5.2 A5.4 5.4 0 0 1 10.8 3"/><path d="M12 6.8 A5.4 5.4 0 0 1 2.2 9"/></g><path d="M9.2 2.4 L12 1.6 L11.6 4.6Z" fill="#888"/><path d="M3.8 9.6 L1 10.4 L1.4 7.4Z" fill="#888"/></svg>

<!-- table -->
<div class="a" style="left:435px;top:380px;width:1362px;height:37px;background:#f5f7fd"></div>
<div class="a" style="left:435px;top:464px;width:1356px;height:1px;background:#ebedf3"></div>
<div class="a" style="left:435px;top:511px;width:1356px;height:1px;background:#ebedf3"></div>
<div class="a" style="left:435px;top:558px;width:1356px;height:1px;background:#ebedf3"></div>
<div class="a" style="left:435px;top:560px;width:1226px;height:5px;border-radius:3px;background:#c4c4c4"></div>
<div class="cb" style="top:391px"></div>
<div class="th" style="left:502px">操作</div><svg class="ic" style="left:528px;top:391px" width="12" height="12" viewBox="0 0 12 12"><circle cx="6" cy="6" r="6" fill="#c8cad3"/><text x="6" y="9.4" font-family="Liberation Sans" font-size="9" font-weight="bold" text-anchor="middle" fill="#fff">?</text></svg><svg class="ic" style="left:549px;top:393px" width="8" height="13" viewBox="0 0 8 13"><path d="M4 1 L7 5 H1Z" fill="#b8bac4"/><path d="M4 12 L7 8 H1Z" fill="#b8bac4"/></svg>
<div class="th" style="left:590px">号码</div><svg class="ic" style="left:621px;top:391px" width="12" height="12" viewBox="0 0 12 12"><circle cx="6" cy="6" r="6" fill="#c8cad3"/><text x="6" y="9.4" font-family="Liberation Sans" font-size="9" font-weight="bold" text-anchor="middle" fill="#fff">?</text></svg>
<div class="th" style="left:820px">性别</div>
<div class="th" style="left:872px">通话时长</div><svg class="ic" style="left:930px;top:393px" width="8" height="13" viewBox="0 0 8 13"><path d="M4 1 L7 5 H1Z" fill="#b8bac4"/><path d="M4 12 L7 8 H1Z" fill="#b8bac4"/></svg>
<div class="th" style="left:978px">评分</div><svg class="ic" style="left:1012px;top:393px" width="8" height="13" viewBox="0 0 8 13"><path d="M4 1 L7 5 H1Z" fill="#b8bac4"/><path d="M4 12 L7 8 H1Z" fill="#b8bac4"/></svg>
<div class="th" style="left:1049px">通话质量</div>
<div class="th" style="left:1137px">挂断方</div>
<div class="th" style="left:1208px">标签</div><svg class="ic" style="left:1235px;top:396px" width="7" height="5" viewBox="0 0 7 5"><path d="M0.5 4.5 L3.5 1 L6.5 4.5" fill="none" stroke="#888" stroke-width="1"/></svg>
<div class="th" style="left:1384px">意向标签</div><svg class="ic" style="left:1442px;top:393px" width="8" height="13" viewBox="0 0 8 13"><path d="M4 1 L7 5 H1Z" fill="#b8bac4"/><path d="M4 12 L7 8 H1Z" fill="#b8bac4"/></svg>
<div class="th" style="left:1526px">转接人工</div><svg class="ic" style="left:1576px;top:391px" width="12" height="12" viewBox="0 0 12 12"><circle cx="6" cy="6" r="6" fill="#c8cad3"/><text x="6" y="9.4" font-family="Liberation Sans" font-size="9" font-weight="bold" text-anchor="middle" fill="#fff">?</text></svg><svg class="ic" style="left:1597px;top:393px" width="8" height="13" viewBox="0 0 8 13"><path d="M4 1 L7 5 H1Z" fill="#b8bac4"/><path d="M4 12 L7 8 H1Z" fill="#b8bac4"/></svg>
<div class="th" style="left:1658px">微信推送</div><svg class="ic" style="left:1708px;top:391px" width="12" height="12" viewBox="0 0 12 12"><circle cx="6" cy="6" r="6" fill="#c8cad3"/><text x="6" y="9.4" font-family="Liberation Sans" font-size="9" font-weight="bold" text-anchor="middle" fill="#fff">?</text></svg><svg class="ic" style="left:1730px;top:393px" width="8" height="13" viewBox="0 0 8 13"><path d="M4 1 L7 5 H1Z" fill="#b8bac4"/><path d="M4 12 L7 8 H1Z" fill="#b8bac4"/></svg>
<svg class="ic" style="left:1772px;top:391px" width="13" height="13" viewBox="0 0 13 13"><path d="M6.5 0.7 L11.6 3.6 V9.4 L6.5 12.3 L1.4 9.4 V3.6Z" fill="none" stroke="#555" stroke-width="1.1" stroke-linejoin="round"/><circle cx="6.5" cy="6.5" r="2.1" fill="none" stroke="#555" stroke-width="1.1"/></svg>
<div class="cb" style="top:434px"></div>
<div class="btn" style="left:503px;top:430px;width:47px;height:21px;line-height:19px;border:1px solid #cfd2da;background:#fff;color:#444;font-size:10px;border-radius:2px;letter-spacing:2px;padding-left:2px">查看</div>
<div class="a" style="left:590px;top:432px;width:80px;height:16px;background:#f4f426"></div>
<div class="a" style="left:597px;top:433px;width:66px;height:13px;background:linear-gradient(90deg,#e6e630,#dada34 40%,#e2e230 70%,#ecec2c);border-radius:3px"></div>
<div class="td" style="left:597px;top:433px;color:#9a9a3a;letter-spacing:1.5px;font-size:11px;opacity:.3">.-00Z9.0.</div>
<div class="td" style="left:591px;top:433px;color:#444">1</div>
<div class="a" style="left:679px;top:430px;width:21px;height:21px;border-radius:11px;background:#f2f4fe"></div>
<svg class="ic" style="left:685px;top:437px" width="8" height="8" viewBox="0 0 12 12"><path d="M2.8 1 L4.4 1 L5.2 3.4 L4 4.4 Q5 6.8 7.6 8 L8.6 6.8 L11 7.6 L11 9.2 Q10.8 10.8 9.2 10.8 Q1.8 10.2 1.2 2.8 Q1.2 1.2 2.8 1Z" fill="#6f8ef7"/></svg>
<div class="a blue" style="left:704px;top:430px;width:64px;height:22px;border-radius:11px;border:1px solid #e6eafb;background:#fff;font-size:12px;line-height:20px;padding-left:29px;white-space:nowrap">备注</div>
<svg class="ic" style="left:715px;top:434px" width="12" height="12" viewBox="0 0 12 12"><path d="M10.5 6.5 V10.5 Q10.5 11.2 9.8 11.2 H1.5 Q0.8 11.2 0.8 10.5 V2.2 Q0.8 1.5 1.5 1.5 H5.5" fill="none" stroke="#4e7cf9" stroke-width="1.2"/><path d="M4 5 H7 M4 7.8 H6" stroke="#4e7cf9" stroke-width="1.1"/><path d="M10.6 0.8 L11.4 1.6 L7.4 5.8 L6.4 6 L6.6 5Z" fill="#4e7cf9"/></svg>
<div class="td" style="left:820px;top:433px">男</div>
<div class="td" style="left:872px;top:433px;letter-spacing:0.4px">00:55</div>
<div class="td" style="left:978px;top:433px;letter-spacing:0.4px">0</div>
<div class="td" style="left:1049px;top:433px;color:#5b62d8">评分低</div>
<div class="td" style="left:1137px;top:433px">客户</div>
<div class="td" style="left:1208px;top:433px;color:#666">-</div>
<div class="tag" style="left:1384px;top:430px;height:21px;line-height:21px;width:87px;background:#f5222d">C级（无意向）</div>
<div class="td" style="left:1526px;top:433px;color:#666">-</div>
<div class="tag" style="left:1658px;top:430px;width:33px;background:#a6a9b9;font-weight:normal;font-size:11px;padding:0 7px">cyp</div>
<div class="cb" style="top:481px"></div>
<div class="btn" style="left:503px;top:477px;width:47px;height:21px;line-height:19px;border:1px solid #cfd2da;background:#fff;color:#444;font-size:10px;border-radius:2px;letter-spacing:2px;padding-left:2px">查看</div>
<div class="a" style="left:590px;top:480px;width:80px;height:16px;background:#f4f426"></div>
<div class="a" style="left:597px;top:481px;width:56px;height:13px;background:linear-gradient(90deg,#e6e630,#dada34 40%,#e2e230 70%,#ecec2c);border-radius:3px"></div>
<div class="td" style="left:591px;top:481px;color:#444">1</div>
<div class="td" style="left:656px;top:481px;color:#444">71</div>
<div class="a" style="left:679px;top:477px;width:21px;height:21px;border-radius:11px;background:#f2f4fe"></div>
<svg class="ic" style="left:685px;top:484px" width="8" height="8" viewBox="0 0 12 12"><path d="M2.8 1 L4.4 1 L5.2 3.4 L4 4.4 Q5 6.8 7.6 8 L8.6 6.8 L11 7.6 L11 9.2 Q10.8 10.8 9.2 10.8 Q1.8 10.2 1.2 2.8 Q1.2 1.2 2.8 1Z" fill="#6f8ef7"/></svg>
<div class="a blue" style="left:704px;top:477px;width:64px;height:22px;border-radius:11px;border:1px solid #e6eafb;background:#fff;font-size:12px;line-height:20px;padding-left:29px;white-space:nowrap">备注</div>
<svg class="ic" style="left:715px;top:481px" width="12" height="12" viewBox="0 0 12 12"><path d="M10.5 6.5 V10.5 Q10.5 11.2 9.8 11.2 H1.5 Q0.8 11.2 0.8 10.5 V2.2 Q0.8 1.5 1.5 1.5 H5.5" fill="none" stroke="#4e7cf9" stroke-width="1.2"/><path d="M4 5 H7 M4 7.8 H6" stroke="#4e7cf9" stroke-width="1.1"/><path d="M10.6 0.8 L11.4 1.6 L7.4 5.8 L6.4 6 L6.6 5Z" fill="#4e7cf9"/></svg>
<div class="td" style="left:820px;top:481px">男</div>
<div class="td" style="left:872px;top:481px;letter-spacing:0.4px">00:54</div>
<div class="td" style="left:978px;top:481px;letter-spacing:0.4px">0</div>
<div class="td" style="left:1049px;top:481px;color:#5b62d8">评分低</div>
<div class="td" style="left:1137px;top:481px">客户</div>
<div class="td" style="left:1208px;top:481px;color:#666">-</div>
<div class="tag" style="left:1384px;top:478px;height:21px;line-height:21px;width:87px;background:#f5222d">C级（无意向）</div>
<div class="td" style="left:1526px;top:481px;color:#666">-</div>
<div class="td" style="left:1658px;top:481px;color:#666">-</div>
<div class="cb" style="top:528px"></div>
<div class="btn" style="left:503px;top:524px;width:47px;height:21px;line-height:19px;border:1px solid #cfd2da;background:#fff;color:#444;font-size:10px;border-radius:2px;letter-spacing:2px;padding-left:2px">查看</div>
<div class="a" style="left:590px;top:527px;width:80px;height:16px;background:#f4f426"></div>
<div class="a" style="left:597px;top:528px;width:66px;height:13px;background:linear-gradient(90deg,#e6e630,#d8d834 40%,#e0e030 70%,#e8e82c);border-radius:3px"></div>
<div class="td" style="left:591px;top:528px;color:#444">1</div>
<div class="a" style="left:679px;top:524px;width:21px;height:21px;border-radius:11px;background:#f2f4fe"></div>
<svg class="ic" style="left:685px;top:531px" width="8" height="8" viewBox="0 0 12 12"><path d="M2.8 1 L4.4 1 L5.2 3.4 L4 4.4 Q5 6.8 7.6 8 L8.6 6.8 L11 7.6 L11 9.2 Q10.8 10.8 9.2 10.8 Q1.8 10.2 1.2 2.8 Q1.2 1.2 2.8 1Z" fill="#6f8ef7"/></svg>
<div class="a blue" style="left:704px;top:524px;width:64px;height:22px;border-radius:11px;border:1px solid #e6eafb;background:#fff;font-size:12px;line-height:20px;padding-left:29px;white-space:nowrap">备注</div>
<svg class="ic" style="left:715px;top:528px" width="12" height="12" viewBox="0 0 12 12"><path d="M10.5 6.5 V10.5 Q10.5 11.2 9.8 11.2 H1.5 Q0.8 11.2 0.8 10.5 V2.2 Q0.8 1.5 1.5 1.5 H5.5" fill="none" stroke="#4e7cf9" stroke-width="1.2"/><path d="M4 5 H7 M4 7.8 H6" stroke="#4e7cf9" stroke-width="1.1"/><path d="M10.6 0.8 L11.4 1.6 L7.4 5.8 L6.4 6 L6.6 5Z" fill="#4e7cf9"/></svg>
<div class="td" style="left:820px;top:528px">男</div>
<div class="td" style="left:872px;top:528px;letter-spacing:0.4px">01:01</div>
<div class="td" style="left:978px;top:528px;letter-spacing:0.4px">200</div>
<div class="td" style="left:1049px;top:528px;color:#f5222d">评分高</div>
<div class="td" style="left:1137px;top:528px">客户</div>
<div class="a" style="left:1208px;top:524px;width:47px;height:22px;background:#1e8cf0;color:#fff;font-size:10px;font-weight:bold;line-height:22px;text-align:center;border-radius:1px;white-space:nowrap">非单身</div>
<div class="tag" style="left:1384px;top:524px;height:22px;line-height:22px;width:109px;background:#4e7cf9">A级（有明确意向）</div>
<div class="tag" style="left:1526px;top:524px;height:22px;line-height:22px;width:68px;background:#7b61e0">李四(李...</div>
<div class="td" style="left:1658px;top:528px;color:#666">-</div>

<!-- OVERLAYS -->
<!-- dropdown -->
<div class="a" style="left:519px;top:314px;width:70px;height:60px;background:#fff;border-radius:3px;box-shadow:0 2px 6px rgba(0,0,0,0.12);z-index:5"></div>
<div class="a" style="left:519px;top:315px;width:70px;height:27px;background:#f5f7fa;z-index:5"></div>
<div class="t blue" style="left:529px;top:320px;font-size:12px;font-weight:bold;z-index:6">精准查找</div>
<div class="t" style="left:529px;top:348px;font-size:12px;color:#555;z-index:6">模糊查找</div>
<!-- red annotation -->
<div class="a" style="left:514px;top:264px;width:83px;height:120px;border:4px solid #fd1a10;border-radius:5px;z-index:7"></div>

<!-- softphone -->
<div class="a" style="left:1424px;top:595px;width:226px;height:53px;border-radius:27px;background:#333848;box-shadow:0 2px 8px rgba(78,124,249,0.45);z-index:8"></div>
<div class="a" style="left:1434px;top:605px;width:33px;height:33px;border-radius:17px;background:#e6e6ec;z-index:9"></div>
<svg class="ic" style="left:1443px;top:614px;z-index:9" width="15" height="15" viewBox="0 0 12 12"><path d="M2.6 0.6 L4.6 0.6 L5.4 3.2 L4 4.2 Q5 6.8 7.8 8 L8.8 6.6 L11.4 7.4 L11.4 9.4 Q11.2 11.2 9.4 11.2 Q1.2 10.6 0.8 2.6 Q0.8 0.8 2.6 0.6Z" fill="#a6a8b6"/></svg>
<div class="t" style="left:1480px;top:606px;font-size:12.4px;letter-spacing:0.3px;color:#fff;z-index:9">张三_472</div>
<svg class="ic" style="left:1540px;top:609px;z-index:9" width="8" height="5" viewBox="0 0 8 5"><path d="M0.5 0.5 H7.5 L4 4.5Z" fill="#fff"/></svg>
<div class="a" style="left:1480px;top:626px;width:54px;height:17px;border-radius:9px;background:#000;z-index:9"></div>
<svg class="ic" style="left:1489px;top:630px;z-index:9" width="9" height="9" viewBox="0 0 9 9"><circle cx="4.5" cy="4.5" r="4.5" fill="#fff"/><path d="M2.8 6.2 L6.2 2.8" stroke="#000" stroke-width="1.1"/></svg>
<div class="t" style="left:1504px;top:627px;font-size:10px;line-height:14px;color:#fff;z-index:9">离线</div>
<div class="a" style="left:1538px;top:626px;width:17px;height:17px;border-radius:9px;background:#000;z-index:9"></div>
<svg class="ic" style="left:1541px;top:629px;z-index:9" width="11" height="11" viewBox="0 0 13 13"><path d="M6.5 0.8 L8 2 L10 1.8 L10.6 3.6 L12.2 4.8 L11.4 6.5 L12.2 8.2 L10.6 9.4 L10 11.2 L8 11 L6.5 12.2 L5 11 L3 11.2 L2.4 9.4 L0.8 8.2 L1.6 6.5 L0.8 4.8 L2.4 3.6 L3 1.8 L5 2Z" fill="none" stroke="#fff" stroke-width="1.3"/><circle cx="6.5" cy="6.5" r="2" fill="none" stroke="#fff" stroke-width="1.3"/></svg>
<svg class="ic" style="left:1592px;top:614px;z-index:9" width="14" height="14" viewBox="0 0 14 14"><circle cx="7" cy="7" r="5.8" fill="none" stroke="#e8e8ee" stroke-width="1.3"/><rect x="6.3" y="3.6" width="1.4" height="4.4" fill="#e8e8ee"/><rect x="6.3" y="9" width="1.4" height="1.4" fill="#e8e8ee"/></svg>
<div class="a" style="left:1611px;top:617px;width:1px;height:8px;background:#555a6b;z-index:9"></div>
<svg class="ic" style="left:1619px;top:615px;z-index:9" width="14" height="12" viewBox="0 0 14 12"><rect x="0.8" y="0.8" width="12.4" height="10.4" fill="none" stroke="#e8e8ee" stroke-width="1.5"/><rect x="7" y="6" width="5" height="4" fill="#e8e8ee"/><path d="M3 3 L6 6 M3 3 H5.4 M3 3 V5.4" stroke="#e8e8ee" stroke-width="1.2" fill="none"/></svg>
<div class="a" style="left:1624px;top:589px;width:12px;height:12px;border-radius:6px;background:#8d909c;border:1px solid #b5b7c0;z-index:10"></div>
<svg class="ic" style="left:1627px;top:592px;z-index:10" width="6" height="6" viewBox="0 0 6 6"><path d="M1 1 L5 5 M5 1 L1 5" stroke="#fff" stroke-width="1.1"/></svg>

<!-- float button -->
<div class="a" style="left:1746px;top:574px;width:49px;height:49px;border-radius:7px 0 0 7px;background:#333848;z-index:8"></div>
<svg class="ic" style="left:1759px;top:590px;z-index:9" width="21" height="19" viewBox="0 0 21 19"><path d="M0.5 0.5 H20.5 V14.5 H12.5 L10.5 17.5 L8.5 14.5 H0.5Z" fill="#fff"/><g stroke="#555a68" stroke-width="1.3"><path d="M5 5.5 V10 M8 4 V11.5 M10.6 6.4 V9 M13.2 4 V11.5 M16 5.5 V10"/></g></svg>

<!-- right strip + footer -->
<div class="a" style="left:1797px;top:70px;width:10px;height:726px;background:#f0f2f6;z-index:2"></div>
<div class="t" style="left:448px;top:788px;color:#555">共计3条</div>
<div class="a" style="left:1591px;top:788px;width:24px;height:10px;border:1px solid #e8ebf7;border-radius:3px;background:#fff"></div>
<div class="a bgblue" style="left:1623px;top:788px;width:24px;height:10px;border-radius:3px"></div>
<div class="a" style="left:1654px;top:788px;width:24px;height:10px;border:1px solid #e8ebf7;border-radius:3px;background:#fff"></div>
<div class="a" style="left:1693px;top:788px;width:82px;height:10px;border:1px solid #e8ebf7;border-radius:3px;background:#fff"></div>
<div class="a" style="left:0;top:795px;width:1807px;height:1px;background:#111;z-index:20"></div>

</body>
</html>
